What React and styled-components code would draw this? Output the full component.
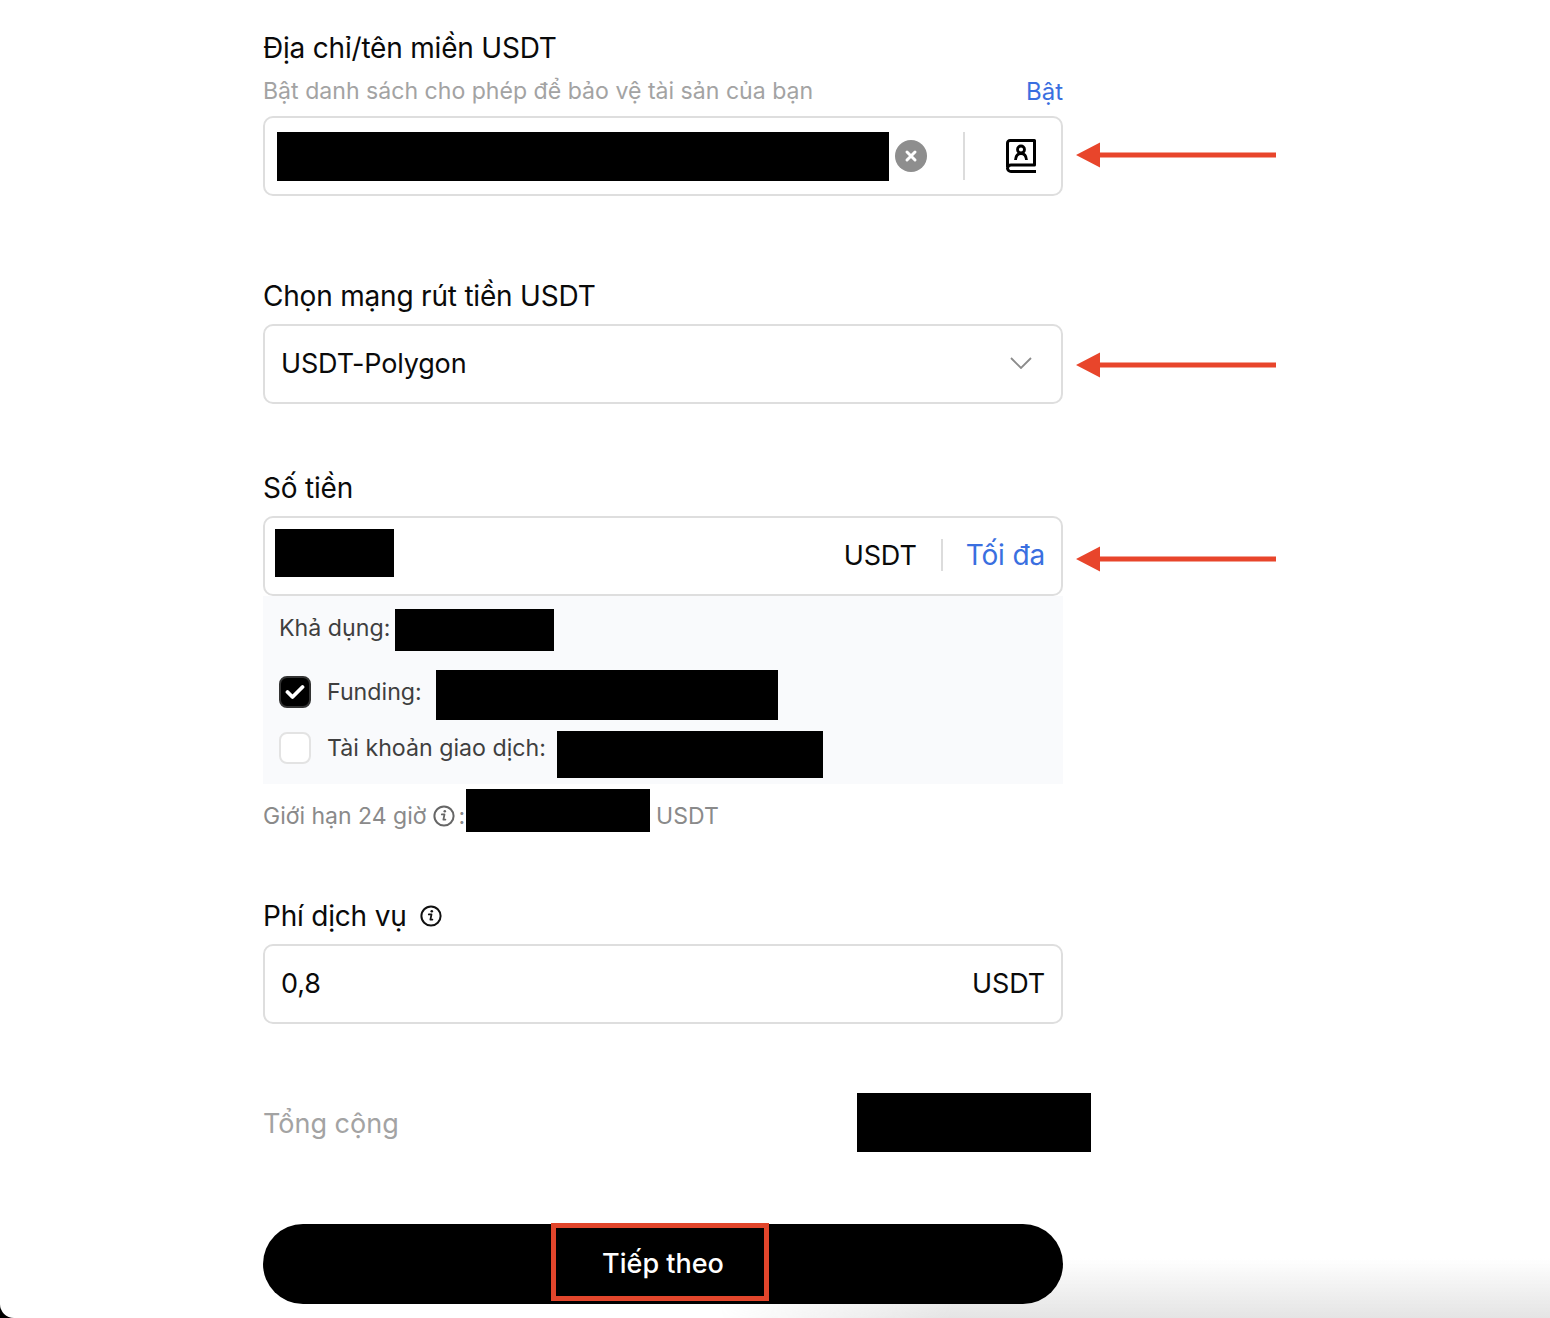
import React from "react";
import styled, { createGlobalStyle } from "styled-components";

const Global = createGlobalStyle`
  html, body { margin: 0; padding: 0; background: #000; }
  body { font-family: Inter, "Noto Sans", "Liberation Sans", sans-serif; color: #0a0a0a; }
  * { box-sizing: border-box; }
`;

const Page = styled.div`
  position: relative;
  width: 1550px;
  height: 1318px;
  overflow: hidden;
  background: #fff;
  border-bottom-left-radius: 14px;
  padding: 28px 0 0 263px;
`;
const Shade = styled.div`
  position: absolute;
  right: 0;
  bottom: 0;
  width: 830px;
  height: 60px;
  background: linear-gradient(to bottom, rgba(255,255,255,0), rgba(228,228,228,1));
  -webkit-mask-image: linear-gradient(to right, transparent, #000 28%);
  mask-image: linear-gradient(to right, transparent, #000 28%);
`;
const Form = styled.div`
  position: relative;
  width: 800px;
  display: flex;
  flex-direction: column;
`;
const Section = styled.section`
  margin-top: ${(p) => p.$top || 0}px;
`;
const Label = styled.div`
  display: flex;
  align-items: center;
  gap: 13px;
  height: 38px;
  padding-top: 1px;
  margin-bottom: ${(p) => (p.$tight ? 5 : 10)}px;
  font-size: 28px;
  line-height: 36px;
  letter-spacing: -0.2px;
`;
const HintRow = styled.div`
  display: flex;
  justify-content: space-between;
  align-items: center;
  height: 40px;
  margin-bottom: 5px;
  font-size: 23.1px;
  color: #a3a3a3;
`;
const BlueLink = styled.span`
  color: #3a6fe0;
  font-size: ${(p) => p.$size || 24}px;
`;
const Field = styled.div`
  position: relative;
  display: flex;
  align-items: center;
  height: 80px;
  padding: ${(p) => p.$pad || "0 16px 2px"};
  border: 2px solid #dedede;
  border-radius: 10px;
  font-size: 27px;
  letter-spacing: -0.15px;
  background: #fff;
`;
const Value = styled.span`
  flex: 1;
`;
const Redact = styled.div`
  flex: none;
  width: ${(p) => p.$w}px;
  height: ${(p) => p.$h}px;
  background: #000;
  margin-left: ${(p) => p.$ml || 0}px;
  margin-bottom: ${(p) => p.$mb || 0}px;
`;
const Rule = styled.div`
  flex: none;
  width: 2px;
  height: ${(p) => p.$h}px;
  background: #dcdcdc;
  margin: ${(p) => p.$m};
`;
const Arrow = styled.svg`
  position: absolute;
  left: 811px;
  top: ${(p) => p.$top}px;
  width: 202px;
  height: 28px;
`;
const Panel = styled.div`
  height: 188px;
  padding: 13px 16px 0;
  background: #f9fafc;
  font-size: 23.2px;
  color: #3f3f3f;
`;
const Row = styled.div`
  display: flex;
  align-items: center;
  height: ${(p) => p.$h}px;
  margin-top: ${(p) => p.$top || 0}px;
`;
const RowText = styled.span`
  margin-top: ${(p) => p.$top || 0}px;
`;
const Check = styled.div`
  flex: none;
  display: flex;
  align-items: center;
  justify-content: center;
  width: 32px;
  height: 32px;
  margin: ${(p) => p.$m};
  border-radius: 8px;
  background: ${(p) => (p.$on ? "#000" : "#fff")};
  border: 2px solid ${(p) => (p.$on ? "#333" : "#e3e3e3")};
`;
const Limit = styled.div`
  display: flex;
  align-items: center;
  height: 43px;
  margin-top: 5px;
  font-size: 23px;
  color: #8a8a8a;
  white-space: nowrap;
`;
const Shift = styled.span`
  position: relative;
  top: 5px;
  display: flex;
  margin-left: ${(p) => p.$ml || 0}px;
`;
const TotalRow = styled.div`
  display: flex;
  align-items: center;
  justify-content: space-between;
  width: 828px;
  height: 59px;
  margin-top: 69px;
  font-size: 27px;
  color: #a3a3a3;
`;
const TotalText = styled.span`
  margin-top: 2px;
`;
const Button = styled.button`
  position: relative;
  display: block;
  width: 800px;
  height: 80px;
  margin-top: 72px;
  border: 0;
  border-radius: 40px;
  background: #000;
  color: #fff;
  font: 500 27px Inter, "Noto Sans", sans-serif;
  padding: 0 0 2px;
`;
const RedBox = styled.div`
  position: absolute;
  left: 288px;
  top: -1px;
  width: 218px;
  height: 78px;
  border: 5px solid #e2452b;
`;

const ArrowIcon = ({ top }) => (
  <Arrow $top={top} viewBox="0 0 202 28">
    <path d="M2 14 L26 1.500 V11.500 H202 V16.500 H26 V26.500 Z" fill="#e8452b" />
  </Arrow>
);
const InfoIcon = ({ size, color }) => (
  <svg width={size} height={size} viewBox="0 0 22 22" fill="none" style={{ flex: "none" }}>
    <circle cx="11" cy="11" r="9.6" stroke={color} strokeWidth="2" />
    <path d="M8.800 9.400h2.700l-1.100 5.200h2" stroke={color} strokeWidth="1.800" strokeLinecap="round" strokeLinejoin="round" />
    <circle cx="11.800" cy="6.300" r="1.300" fill={color} />
  </svg>
);

export default function App() {
  return (
    <Page>
      <Global />
      <Shade />
      <Form>
        <Section>
          <Label $tight>Địa chỉ/tên miền USDT</Label>
          <HintRow>
            <span>Bật danh sách cho phép để bảo vệ tài sản của bạn</span>
            <BlueLink>Bật</BlueLink>
          </HintRow>
          <Field $pad="0 0 0 12px">
            <Redact $w={612} $h={49} />
            <svg width="32" height="32" viewBox="0 0 32 32" style={{ marginLeft: 6, flex: "none" }}>
              <circle cx="16" cy="16" r="16" fill="#8e8e8e" />
              <path d="M12 12l8 8M20 12l-8 8" stroke="#fff" strokeWidth="3" strokeLinecap="round" />
            </svg>
            <Rule $h={48} $m="0 0 0 36px" />
            <svg width="30" height="34" viewBox="0 0 30 34" fill="none" style={{ marginLeft: 41, flex: "none" }}>
              <path d="M1.500 28V4A2.500 2.500 0 0 1 4 1.500H28.500V26H5A3.500 3.500 0 0 0 1.500 29.500V29A3.500 3.500 0 0 0 5 32.500H30" stroke="#000" strokeWidth="3" strokeLinejoin="round" />
              <circle cx="15" cy="10.500" r="3.500" stroke="#000" strokeWidth="2.800" />
              <path d="M9.500 21c.3-4 2.500-6.500 5.500-6.500s5.200 2.500 5.500 6.500" stroke="#000" strokeWidth="2.800" />
            </svg>
          </Field>
          <ArrowIcon top={113} />
        </Section>

        <Section $top={80}>
          <Label>Chọn mạng rút tiền USDT</Label>
          <Field>
            <Value>USDT-Polygon</Value>
            <svg width="22" height="12" viewBox="0 0 22 12" fill="none" style={{ marginRight: 13 }}>
              <path d="M1 1l10 10L21 1" stroke="#8b8b8b" strokeWidth="1.800" />
            </svg>
          </Field>
          <ArrowIcon top={323} />
        </Section>

        <Section $top={64}>
          <Label>Số tiền</Label>
          <Field $pad="0 16px 2px 10px">
            <Redact $w={119} $h={48} $mb={4} />
            <Value />
            <span>USDT</span>
            <Rule $h={32} $m="0 23px 0 24px" />
            <BlueLink $size={28}>Tối đa</BlueLink>
          </Field>
          <ArrowIcon top={517} />
          <Panel>
            <Row $h={42}>
              <RowText $top={-4}>Khả dụng:</RowText>
              <Redact $w={159} $h={42} $ml={5} />
            </Row>
            <Row $h={50} $top={19}>
              <Check $on $m="-6px 16px 0 0">
                <svg width="20" height="16" viewBox="0 0 20 16" fill="none">
                  <path d="M2.500 8l5 5L17.500 3" stroke="#fff" strokeWidth="3.800" strokeLinecap="round" strokeLinejoin="round" />
                </svg>
              </Check>
              <RowText $top={-6}>Funding:</RowText>
              <Redact $w={342} $h={50} $ml={14} />
            </Row>
            <Row $h={47} $top={11}>
              <Check $m="-14px 16px 0 0" />
              <RowText $top={-14}>Tài khoản giao dịch:</RowText>
              <Redact $w={266} $h={47} $ml={11} />
            </Row>
          </Panel>
          <Limit>
            <Shift>Giới hạn 24 giờ</Shift>
            <Shift $ml={7}>
              <InfoIcon size={22} color="#666" />
            </Shift>
            <Shift $ml={3}>:</Shift>
            <Redact $w={184} $h={43} $ml={1} />
            <Shift $ml={6}>USDT</Shift>
          </Limit>
        </Section>

        <Section $top={64}>
          <Label>
            <span>Phí dịch vụ</span>
            <InfoIcon size={22} color="#111" />
          </Label>
          <Field>
            <Value>0,8</Value>
            <span>USDT</span>
          </Field>
        </Section>

        <TotalRow>
          <TotalText>Tổng cộng</TotalText>
          <Redact $w={234} $h={59} />
        </TotalRow>

        <Button>
          Tiếp theo
          <RedBox />
        </Button>
      </Form>
    </Page>
  );
}
